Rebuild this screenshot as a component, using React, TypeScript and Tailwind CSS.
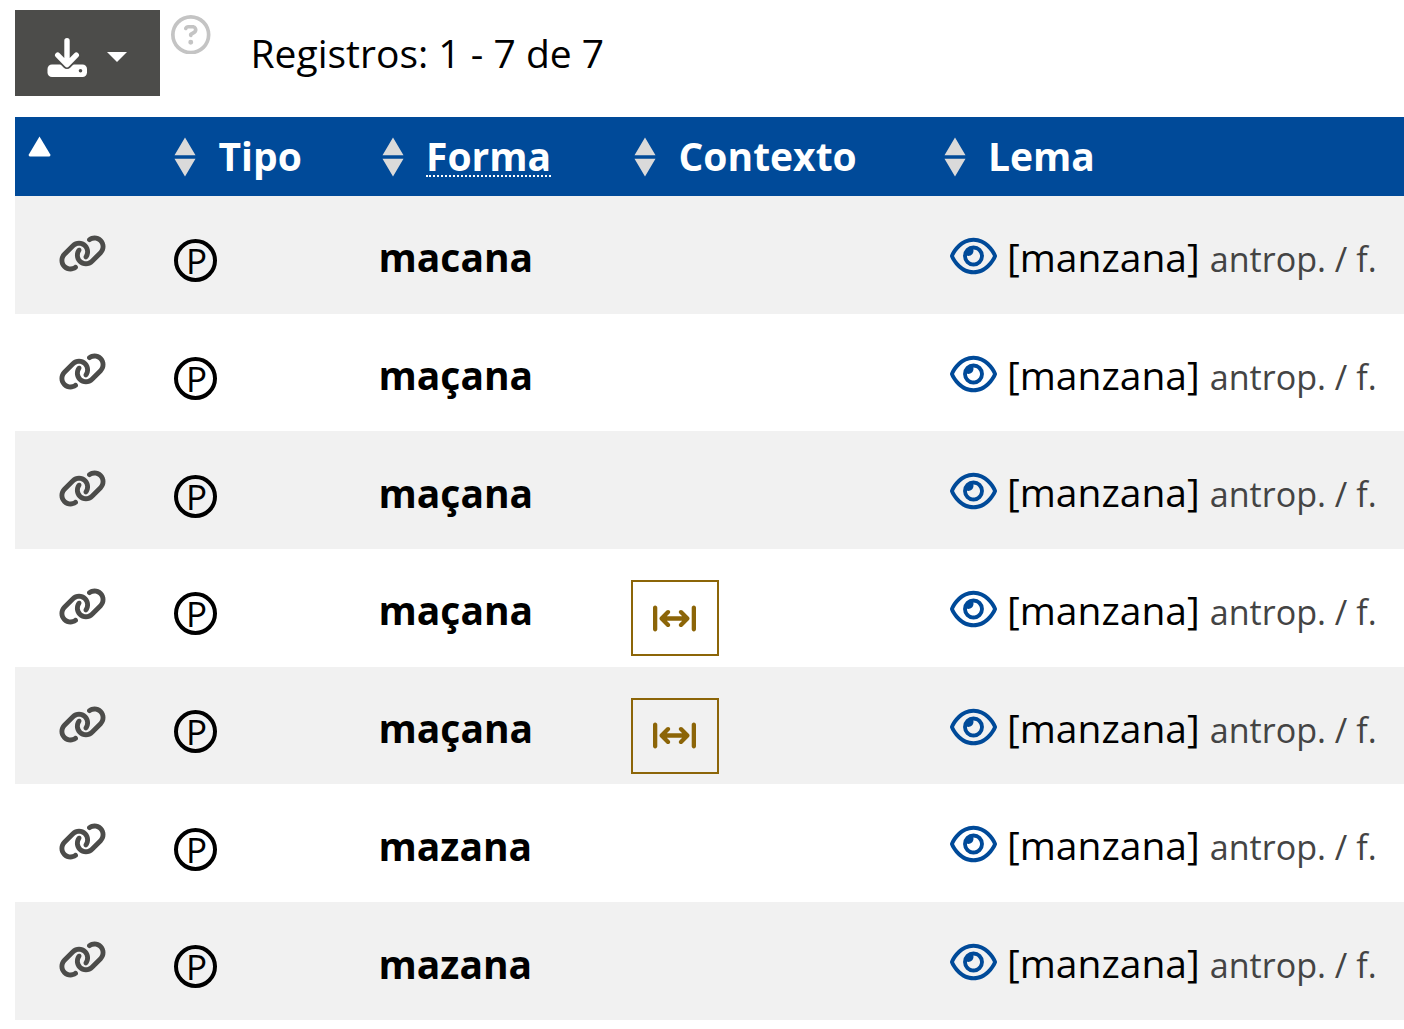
import React from "react";
import {
  FaLink,
  FaRegEye,
  FaRegCircleQuestion,
  FaArrowsLeftRightToLine,
} from "react-icons/fa6";

const GRID = "grid grid-cols-[159px_205px_252px_319px_1fr]";

const rows = [
  { form: "macana", context: false },
  { form: "maçana", context: false },
  { form: "maçana", context: false },
  { form: "maçana", context: true },
  { form: "maçana", context: true },
  { form: "mazana", context: false },
  { form: "mazana", context: false },
];

function DownloadIcon() {
  return (
    <svg width="40" height="40" viewBox="0 0 40 40" className="shrink-0">
      <rect x="0.5" y="26.5" width="39.5" height="12.5" rx="4.5" fill="#fff" />
      <path d="M10.7 17.2 20 26.6l9.3-9.4" fill="none" stroke="#4c4c4a" strokeWidth="9" strokeLinecap="round" strokeLinejoin="round" />
      <path d="M20 2.8v23M10.7 17.2 20 26.6l9.3-9.4" fill="none" stroke="#fff" strokeWidth="5.4" strokeLinecap="round" strokeLinejoin="round" />
      <circle cx="33.5" cy="32.7" r="1.8" fill="#4c4c4a" />
    </svg>
  );
}

function SortIcon() {
  return (
    <svg width="22" height="40" viewBox="0 0 22 40" className="mt-[20px] shrink-0">
      <path d="M11 0.5 21.5 18.3H0.5zM11 39.5 21.5 21.7H0.5z" fill="#dadada" />
    </svg>
  );
}

function HeaderCell({ label, className, underline }: { label: string; className: string; underline?: boolean }) {
  return (
    <div className={`flex items-start ${className}`}>
      <SortIcon />
      <span
        className={
          underline
            ? "mt-[12px] ml-[22.5px] h-[48px] border-b-2 border-dotted border-white leading-[54px]"
            : "mt-[12px] ml-[22.5px] leading-[54px]"
        }
      >
        {label}
      </span>
    </div>
  );
}

export default function App() {
  return (
    <main className="h-[1029px] w-[1404px] overflow-hidden bg-white pl-[15px] font-['Open_Sans',sans-serif] text-[39px] text-black">
      <div className="flex h-[117px] items-start pt-[10px]">
        <button className="flex h-[86px] w-[145px] items-start bg-[#4c4c4a] pt-[28px] pl-[32px]">
          <DownloadIcon />
          <svg width="20" height="10" viewBox="0 0 20 10" className="mt-[14px] ml-[20px] shrink-0">
            <path d="M0 0h20L10 10z" fill="#fff" />
          </svg>
        </button>
        <FaRegCircleQuestion className="mt-[4.5px] ml-[11px] size-[39.5px] shrink-0 text-[#c4c4c4]" />
        <span className="mt-[16px] ml-[40px] leading-[54px] whitespace-nowrap">Registros: 1 - 7 de 7</span>
      </div>

      <div className={`${GRID} h-[79px] bg-[#004a99] font-bold text-white`}>
        <div className="pt-[18px] pl-[13px]">
          <svg width="24" height="23" viewBox="0 0 24 23">
            <path d="M11.5 1.5 22.3 19.5q.6 2-1.2 2H2q-1.8 0-1.2-2z" fill="#fff" />
          </svg>
        </div>
        <HeaderCell label="Tipo" className="" />
        <HeaderCell label="Forma" className="pl-[2.5px]" underline />
        <HeaderCell label="Contexto" className="pl-[3px]" />
        <HeaderCell label="Lema" className="-ml-[6.5px]" />
      </div>

      <div>
        {rows.map((row, i) => (
          <div key={i} className={`${GRID} h-[117.69px] items-start odd:bg-[#f1f1f1] even:bg-white`}>
            <FaLink className="mt-[38px] ml-[43px] h-[39px] w-[49px] text-[#4c4c4a]" />
            <span className="mt-[43.3px] flex size-[43px] items-center justify-center rounded-full border-4 border-black pl-[2px] text-[35px] leading-none">
              P
            </span>
            <span className="mt-[34.4px] -ml-[0.5px] leading-[54px] font-bold">{row.form}</span>
            <div>
              {row.context && (
                <button className="mt-[31px] flex h-[76px] w-[88px] items-center justify-center border-2 border-[#8c6508] text-[#8c6508]">
                  <FaArrowsLeftRightToLine className="mr-[1px] h-[35px] w-[43px]" />
                </button>
              )}
            </div>
            <div className="mt-[34px] flex items-baseline leading-[54px] whitespace-nowrap">
              <FaRegEye className="mt-[5px] mr-[10px] h-[42px] w-[47px] shrink-0 self-start text-[#004a99]" />
              <span>[manzana]</span>
              <span className="ml-[10px] text-[34.1px] text-[#444]">antrop. / f.</span>
            </div>
          </div>
        ))}
      </div>
    </main>
  );
}
